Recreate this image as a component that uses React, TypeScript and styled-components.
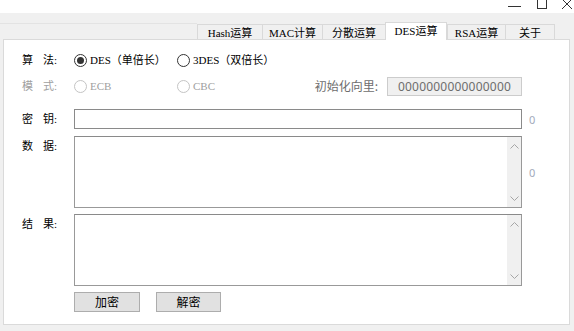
import React from 'react'
import styled, { createGlobalStyle } from 'styled-components'

const GlobalStyle = createGlobalStyle`
  html, body {
    margin: 0;
    padding: 0;
  }
  body {
    width: 574px;
    height: 331px;
    overflow: hidden;
    background: #f0f0f0;
    font-family: "Liberation Serif", "Noto Sans CJK SC", serif;
    font-size: 11px;
    color: #000;
  }
`

const Window = styled.div`
  display: flex;
  flex-direction: column;
  width: 574px;
  height: 331px;
`

const TitleBar = styled.div`
  height: 13px;
  background: #fff;
  display: flex;
  justify-content: flex-end;
  overflow: hidden;
`

const TabBar = styled.div`
  height: 26px;
  display: flex;
  align-items: flex-end;
  padding-right: 19px;
`

const TabFiller = styled.div`
  flex: 1;
  height: 15px;
  border-top: 1px solid #e3e3e3;
`

const Tab = styled.div<{ $w: number; $active?: boolean; $last?: boolean }>`
  width: ${(p) => p.$w}px;
  box-sizing: border-box;
  height: ${(p) => (p.$active ? 18 : 15)}px;
  margin-bottom: ${(p) => (p.$active ? -1 : 0)}px;
  position: relative;
  z-index: ${(p) => (p.$active ? 1 : 0)};
  background: ${(p) => (p.$active ? '#fff' : '#f0f0f0')};
  border: 1px solid #d9d9d9;
  border-bottom: none;
  border-right: ${(p) => (p.$active || p.$last ? '1px solid #d9d9d9' : 'none')};
  display: flex;
  justify-content: center;
  padding-top: 2px;
  line-height: 12px;
  white-space: nowrap;
`

const Panel = styled.div`
  flex: 1;
  margin: 0 4px 6px 3px;
  background: #fff;
  border: 1px solid #dadada;
  box-sizing: border-box;
  padding: 10px 0 0 18px;
  display: flex;
  flex-direction: column;
`

const Row = styled.div<{ $top: number; $h: number; $align?: string }>`
  display: grid;
  grid-template-columns: 52px 448px auto;
  align-items: ${(p) => p.$align || 'center'};
  margin-top: ${(p) => p.$top}px;
  height: ${(p) => p.$h}px;
`

const Label = styled.div<{ $disabled?: boolean; $pad?: number }>`
  display: flex;
  gap: 10px;
  line-height: 12px;
  padding-top: ${(p) => p.$pad || 0}px;
  color: ${(p) => (p.$disabled ? '#a0a0a0' : '#000')};
  white-space: nowrap;
`

const FieldLine = styled.div`
  display: flex;
  align-items: center;
`

const RadioOption = styled.label<{ $w: number; $disabled?: boolean }>`
  width: ${(p) => p.$w}px;
  display: flex;
  align-items: center;
  gap: 3px;
  line-height: 12px;
  white-space: nowrap;
  color: ${(p) => (p.$disabled ? '#a0a0a0' : '#000')};
`

const RadioDot = styled.span<{ $checked?: boolean; $disabled?: boolean }>`
  width: 13px;
  height: 13px;
  box-sizing: border-box;
  border-radius: 50%;
  border: 1px solid ${(p) => (p.$disabled ? '#c4c4c4' : '#333')};
  display: inline-flex;
  align-items: center;
  justify-content: center;
  flex-shrink: 0;
  &::after {
    content: '';
    width: 7px;
    height: 7px;
    border-radius: 50%;
    background: #333;
    display: ${(p) => (p.$checked ? 'block' : 'none')};
  }
`

const IvLabel = styled.span`
  margin-left: auto;
  margin-right: 9px;
  font-family: "Noto Sans CJK SC", sans-serif;
  font-size: 12px;
  line-height: 14px;
  color: #6d6d6d;
`

const IvInput = styled.input`
  width: 135px;
  height: 19px;
  box-sizing: border-box;
  margin: 0;
  padding: 0;
  border: 1px solid #cccccc;
  background: #f0f0f0;
  text-align: center;
  font-family: "Noto Sans", sans-serif;
  font-size: 12px;
  letter-spacing: 0.2px;
  color: #6d6d6d;
`

const TextInput = styled.input`
  width: 448px;
  height: 20px;
  box-sizing: border-box;
  margin: 0;
  padding: 0 3px;
  border: 1px solid #8a8a8a;
  background: #fff;
  outline: none;
`

const TextBox = styled.div`
  width: 448px;
  height: 72px;
  box-sizing: border-box;
  border: 1px solid #999;
  border-top-color: #8a8a8a;
  background: #fff;
  display: flex;
  justify-content: flex-end;
`

const ScrollTrack = styled.div`
  width: 14px;
  background: #f0f0f0;
  display: flex;
  flex-direction: column;
  justify-content: space-between;
  align-items: center;
  padding: 7px 0 6px;
`

const Counter = styled.span<{ $center?: boolean }>`
  padding-left: 7px;
  align-self: ${(p) => (p.$center ? 'center' : 'auto')};
  font-family: "Noto Sans", sans-serif;
  font-size: 11px;
  color: #a3aabb;
`

const ButtonBar = styled.div`
  display: flex;
  gap: 16px;
`

const Button = styled.button<{ $w: number }>`
  width: ${(p) => p.$w}px;
  height: 20px;
  box-sizing: border-box;
  margin: 0;
  padding: 0;
  border: 1px solid #adadad;
  background: #e1e1e1;
  font-family: "Noto Sans CJK SC", sans-serif;
  font-size: 12px;
  line-height: 16px;
  color: #000;
`

const CaptionIcons = () => (
  <svg width="70" height="13" viewBox="0 0 70 13" fill="none" stroke="#333" strokeWidth="1">
    <line x1="4" y1="6.5" x2="17" y2="6.5" />
    <rect x="33.5" y="-1.5" width="9" height="10" />
    <line x1="58" y1="-1" x2="68" y2="9" />
    <line x1="68" y1="-1" x2="58" y2="9" />
  </svg>
)

const Chevron = ({ up }: { up?: boolean }) => (
  <svg width="9" height="5" viewBox="0 0 9 5" fill="none" stroke="#a6a6a6" strokeWidth="1">
    {up ? <polyline points="0.5,4.5 4.5,0.5 8.5,4.5" /> : <polyline points="0.5,0.5 4.5,4.5 8.5,0.5" />}
  </svg>
)

const ScrollBox = () => (
  <TextBox>
    <ScrollTrack>
      <Chevron up />
      <Chevron />
    </ScrollTrack>
  </TextBox>
)

const tabs = [
  { title: 'Hash运算', w: 65 },
  { title: 'MAC计算', w: 60 },
  { title: '分散运算', w: 63 },
  { title: 'DES运算', w: 62, active: true },
  { title: 'RSA运算', w: 58 },
  { title: '关于', w: 50 }
]

function App() {
  return (
    <Window>
      <GlobalStyle />
      <TitleBar>
        <CaptionIcons />
      </TitleBar>
      <TabBar>
        <TabFiller />
        {tabs.map((t, i) => (
          <Tab key={t.title} $w={t.w} $active={t.active} $last={i === tabs.length - 1}>
            {t.title}
          </Tab>
        ))}
      </TabBar>
      <Panel>
        <Row $top={0} $h={20}>
          <Label>
            <span>算</span>
            <span>法:</span>
          </Label>
          <FieldLine>
            <RadioOption $w={103}>
              <RadioDot $checked />
              DES（单倍长）
            </RadioOption>
            <RadioOption $w={120}>
              <RadioDot />
              3DES（双倍长）
            </RadioOption>
          </FieldLine>
        </Row>
        <Row $top={6} $h={20}>
          <Label $disabled>
            <span>模</span>
            <span>式:</span>
          </Label>
          <FieldLine>
            <RadioOption $w={103} $disabled>
              <RadioDot $disabled />
              ECB
            </RadioOption>
            <RadioOption $w={60} $disabled>
              <RadioDot $disabled />
              CBC
            </RadioOption>
            <IvLabel>初始化向里:</IvLabel>
            <IvInput disabled value='0000000000000000' readOnly />
          </FieldLine>
        </Row>
        <Row $top={13} $h={20}>
          <Label>
            <span>密</span>
            <span>钥:</span>
          </Label>
          <TextInput readOnly value='' />
          <Counter>0</Counter>
        </Row>
        <Row $top={7} $h={72} $align='start'>
          <Label $pad={4}>
            <span>数</span>
            <span>据:</span>
          </Label>
          <ScrollBox />
          <Counter $center>0</Counter>
        </Row>
        <Row $top={6} $h={72} $align='start'>
          <Label $pad={4}>
            <span>结</span>
            <span>果:</span>
          </Label>
          <ScrollBox />
        </Row>
        <Row $top={6} $h={20}>
          <span />
          <ButtonBar>
            <Button $w={66}>加密</Button>
            <Button $w={65}>解密</Button>
          </ButtonBar>
        </Row>
      </Panel>
    </Window>
  )
}

export default App
